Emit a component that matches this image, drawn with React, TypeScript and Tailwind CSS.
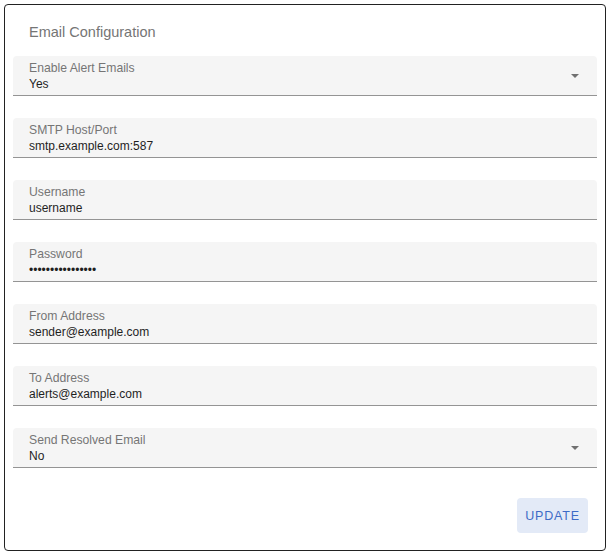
import React from "react";

const fields: { label: string; value: string; select?: boolean }[] = [
  { label: "Enable Alert Emails", value: "Yes", select: true },
  { label: "SMTP Host/Port", value: "smtp.example.com:587" },
  { label: "Username", value: "username" },
  { label: "Password", value: "••••••••••••••••" },
  { label: "From Address", value: "sender@example.com" },
  { label: "To Address", value: "alerts@example.com" },
  { label: "Send Resolved Email", value: "No", select: true },
];

function Field({ label, value, select }: { label: string; value: string; select?: boolean }) {
  return (
    <div className="relative h-[40px] bg-[#f5f5f5] rounded-t-[4px] border-b border-[#949494] pl-[16px] pt-[5px]">
      <div className="text-[12.2px] leading-[14px] text-[#757575]">{label}</div>
      <div className="text-[12px] leading-[17px] mt-[1px] text-[#1f1f1f]">{value}</div>
      {select && (
        <svg className="absolute right-[18px] top-[18px]" width="8" height="4" viewBox="0 0 8 4">
          <path d="M0 0 L8 0 L4 4 Z" fill="#707070" />
        </svg>
      )}
    </div>
  );
}

export default function App() {
  return (
    <div className="p-1 bg-white" style={{ fontFamily: '"Liberation Sans", Arial, sans-serif' }}>
      <div className="w-[602px] h-[547px] border border-[#222] rounded-[4px] px-[8px] pt-[8px] flex flex-col">
        <div className="h-[43px] pl-[16px] pt-[9px] text-[14.5px] leading-[20px] text-[#757575]">
          Email Configuration
        </div>
        <div className="flex flex-col gap-[22px]">
          {fields.map((f) => (
            <Field key={f.label} {...f} />
          ))}
        </div>
        <div className="flex justify-end pt-[30px] pr-[9px]">
          <button className="w-[71px] h-[35px] pt-[2px] rounded-[4px] bg-[#e3eaf7] text-[#3d6bc6] text-[12.5px] tracking-[0.8px]">
            UPDATE
          </button>
        </div>
      </div>
    </div>
  );
}
